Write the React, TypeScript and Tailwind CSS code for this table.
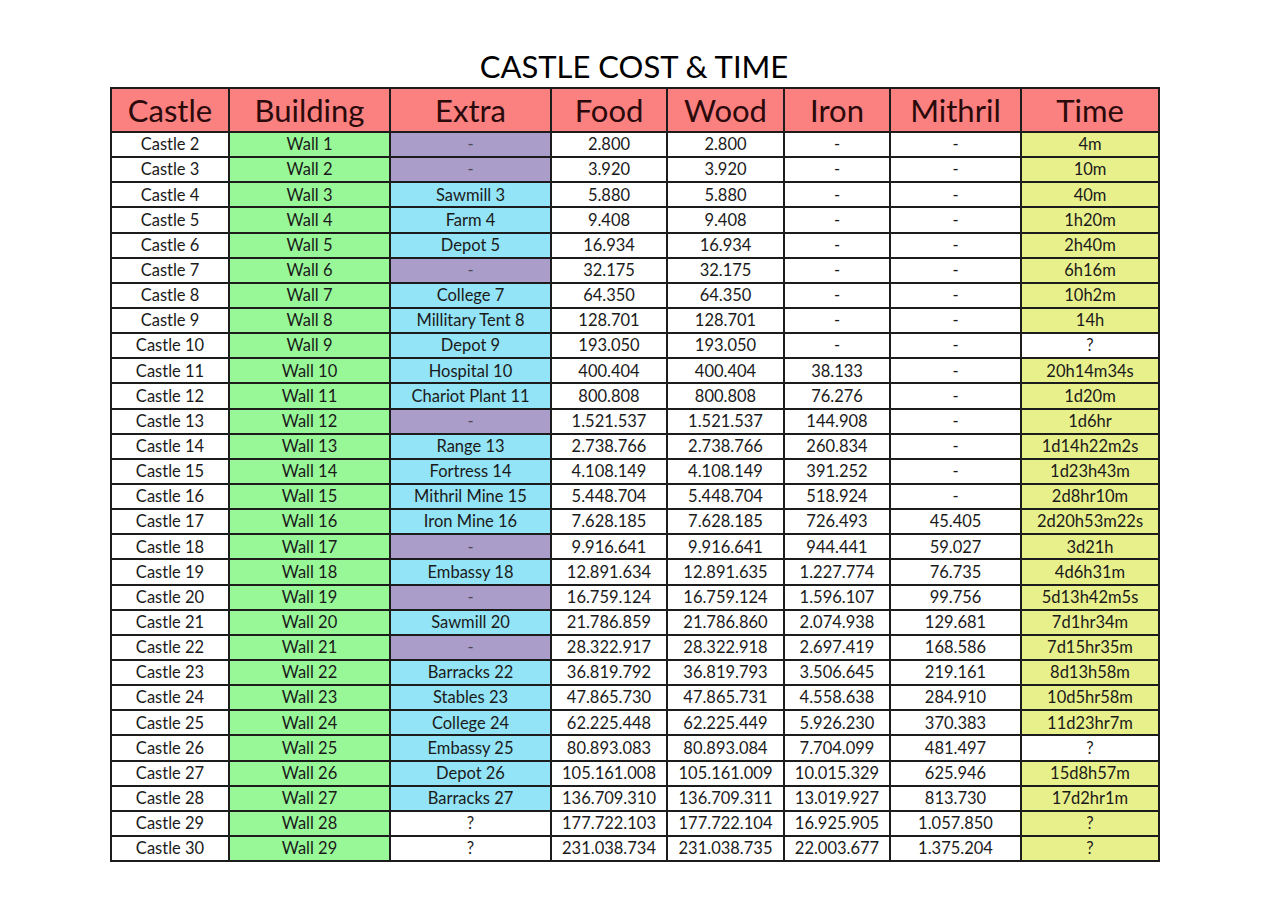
import React from 'react';

// extra: '-' -> purple, '?' -> white, otherwise cyan; time: '?' is white, '?!' is a yellow '?'
const rows: [string, string, string, string, string, string, string, string][] = [
  ['Castle 2', 'Wall 1', '-', '2.800', '2.800', '-', '-', '4m'],
  ['Castle 3', 'Wall 2', '-', '3.920', '3.920', '-', '-', '10m'],
  ['Castle 4', 'Wall 3', 'Sawmill 3', '5.880', '5.880', '-', '-', '40m'],
  ['Castle 5', 'Wall 4', 'Farm 4', '9.408', '9.408', '-', '-', '1h20m'],
  ['Castle 6', 'Wall 5', 'Depot 5', '16.934', '16.934', '-', '-', '2h40m'],
  ['Castle 7', 'Wall 6', '-', '32.175', '32.175', '-', '-', '6h16m'],
  ['Castle 8', 'Wall 7', 'College 7', '64.350', '64.350', '-', '-', '10h2m'],
  ['Castle 9', 'Wall 8', 'Millitary Tent 8', '128.701', '128.701', '-', '-', '14h'],
  ['Castle 10', 'Wall 9', 'Depot 9', '193.050', '193.050', '-', '-', '?'],
  ['Castle 11', 'Wall 10', 'Hospital 10', '400.404', '400.404', '38.133', '-', '20h14m34s'],
  ['Castle 12', 'Wall 11', 'Chariot Plant 11', '800.808', '800.808', '76.276', '-', '1d20m'],
  ['Castle 13', 'Wall 12', '-', '1.521.537', '1.521.537', '144.908', '-', '1d6hr'],
  ['Castle 14', 'Wall 13', 'Range 13', '2.738.766', '2.738.766', '260.834', '-', '1d14h22m2s'],
  ['Castle 15', 'Wall 14', 'Fortress 14', '4.108.149', '4.108.149', '391.252', '-', '1d23h43m'],
  ['Castle 16', 'Wall 15', 'Mithril Mine 15', '5.448.704', '5.448.704', '518.924', '-', '2d8hr10m'],
  ['Castle 17', 'Wall 16', 'Iron Mine 16', '7.628.185', '7.628.185', '726.493', '45.405', '2d20h53m22s'],
  ['Castle 18', 'Wall 17', '-', '9.916.641', '9.916.641', '944.441', '59.027', '3d21h'],
  ['Castle 19', 'Wall 18', 'Embassy 18', '12.891.634', '12.891.635', '1.227.774', '76.735', '4d6h31m'],
  ['Castle 20', 'Wall 19', '-', '16.759.124', '16.759.124', '1.596.107', '99.756', '5d13h42m5s'],
  ['Castle 21', 'Wall 20', 'Sawmill 20', '21.786.859', '21.786.860', '2.074.938', '129.681', '7d1hr34m'],
  ['Castle 22', 'Wall 21', '-', '28.322.917', '28.322.918', '2.697.419', '168.586', '7d15hr35m'],
  ['Castle 23', 'Wall 22', 'Barracks 22', '36.819.792', '36.819.793', '3.506.645', '219.161', '8d13h58m'],
  ['Castle 24', 'Wall 23', 'Stables 23', '47.865.730', '47.865.731', '4.558.638', '284.910', '10d5hr58m'],
  ['Castle 25', 'Wall 24', 'College 24', '62.225.448', '62.225.449', '5.926.230', '370.383', '11d23hr7m'],
  ['Castle 26', 'Wall 25', 'Embassy 25', '80.893.083', '80.893.084', '7.704.099', '481.497', '?'],
  ['Castle 27', 'Wall 26', 'Depot 26', '105.161.008', '105.161.009', '10.015.329', '625.946', '15d8h57m'],
  ['Castle 28', 'Wall 27', 'Barracks 27', '136.709.310', '136.709.311', '13.019.927', '813.730', '17d2hr1m'],
  ['Castle 29', 'Wall 28', '?', '177.722.103', '177.722.104', '16.925.905', '1.057.850', '?!'],
  ['Castle 30', 'Wall 29', '?', '231.038.734', '231.038.735', '22.003.677', '1.375.204', '?!'],
];

const headers = ['Castle', 'Building', 'Extra', 'Food', 'Wood', 'Iron', 'Mithril', 'Time'];
const widths = ['w-[118px]', 'w-[161px]', 'w-[161px]', 'w-[116px]', 'w-[117px]', 'w-[106px]', 'w-[131px]', 'w-[138px]'];

const cell = 'border-2 border-[#1c1c1c] text-center align-middle p-0 leading-none';

function extraClass(v: string) {
  if (v === '-') return 'bg-[#aa9dc9] text-[#4a4a5a]';
  if (v === '?') return 'bg-white';
  return 'bg-[#93e4f6]';
}

export default function App() {
  return (
    <div
      className="w-[1280px] h-[909px] bg-white text-[#1a1a1a] overflow-hidden"
      style={{ fontFamily: 'Lato, "Open Sans", "Liberation Sans", sans-serif' }}
    >
      <div className="w-[1048px] ml-[110px] pt-[46px]">
        <h1 className="text-center text-[31px] leading-[41px] h-[41px] font-normal text-black">
          CASTLE COST &amp; TIME
        </h1>
        <table className="table-fixed border-collapse w-[1048px]">
          <colgroup>
            {widths.map((w, i) => (
              <col key={i} className={w} />
            ))}
          </colgroup>
          <thead>
            <tr className="h-[44px]">
              {headers.map((h) => (
                <th key={h} className={`${cell} bg-[#fb8080] text-[31px] font-normal text-[#2a0a0a]`}>
                  {h}
                </th>
              ))}
            </tr>
          </thead>
          <tbody className="text-[16.5px]">
            {rows.map((r) => {
              const yellowTime = r[7] !== '?';
              const time = r[7] === '?!' ? '?' : r[7];
              return (
                <tr key={r[0]} className="h-[25.15px]">
                  <td className={`${cell} bg-white`}>{r[0]}</td>
                  <td className={`${cell} bg-[#98f898]`}>{r[1]}</td>
                  <td className={`${cell} ${extraClass(r[2])}`}>{r[2]}</td>
                  <td className={`${cell} bg-white`}>{r[3]}</td>
                  <td className={`${cell} bg-white`}>{r[4]}</td>
                  <td className={`${cell} bg-white`}>{r[5]}</td>
                  <td className={`${cell} bg-white`}>{r[6]}</td>
                  <td className={`${cell} ${yellowTime ? 'bg-[#e8f08c]' : 'bg-white'}`}>{time}</td>
                </tr>
              );
            })}
          </tbody>
        </table>
      </div>
    </div>
  );
}
